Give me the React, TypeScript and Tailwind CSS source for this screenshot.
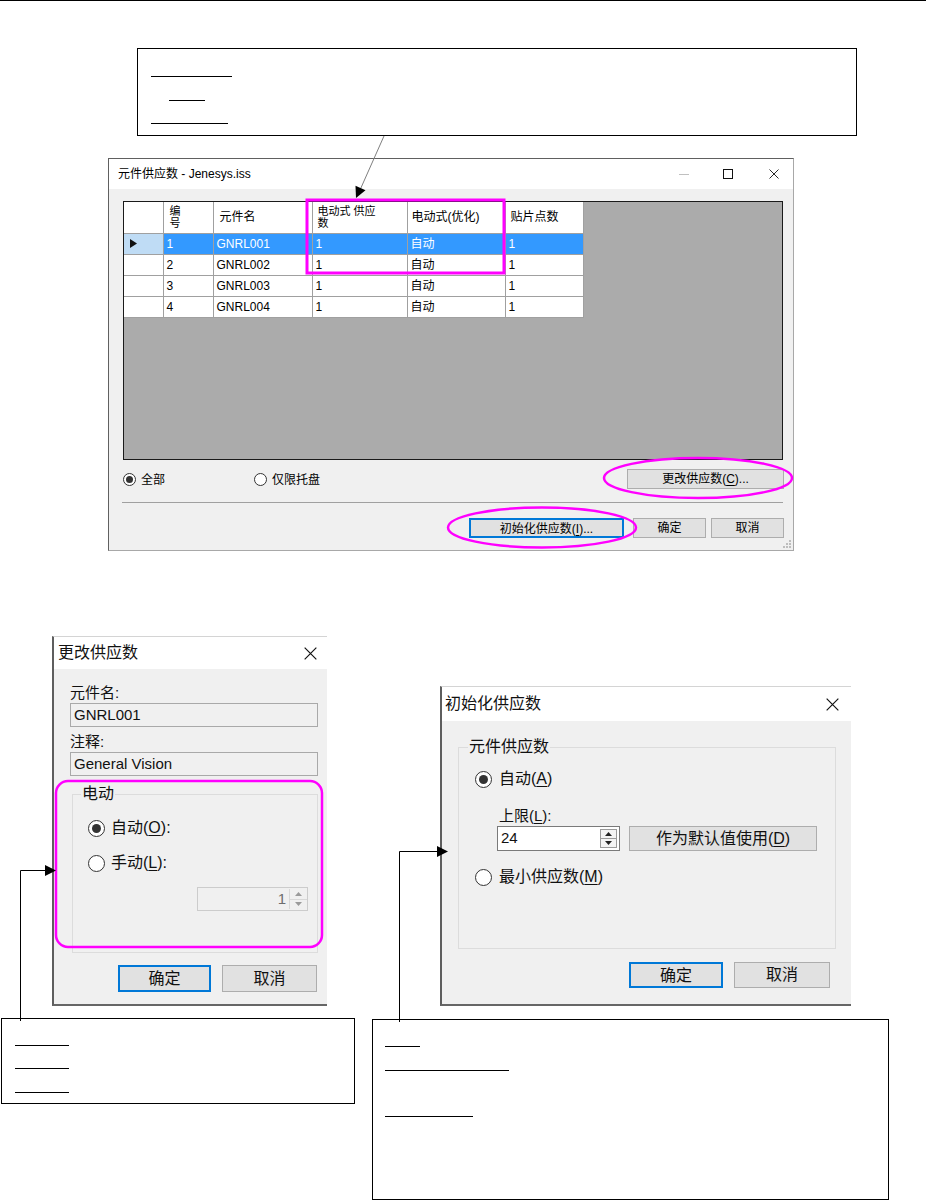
import React from "react";

const UI = "font-['Liberation_Sans','Noto_Sans_CJK_SC',sans-serif]";

function RadioSm({ checked }: { checked?: boolean }) {
  return (
    <span className="flex h-[13px] w-[13px] items-center justify-center rounded-full border border-[#333] bg-white">
      {checked && <span className="h-[7px] w-[7px] rounded-full bg-[#333]" />}
    </span>
  );
}

function RadioLg({ checked }: { checked?: boolean }) {
  return (
    <span className="flex h-[17px] w-[17px] shrink-0 items-center justify-center rounded-full border-[1.5px] border-[#333] bg-white">
      {checked && <span className="h-[9px] w-[9px] rounded-full bg-[#333]" />}
    </span>
  );
}

function CloseIcon({ s }: { s: number }) {
  return (
    <svg width={s} height={s} viewBox="0 0 10 10" className="block">
      <path d="M0.5 0.5 L9.5 9.5 M9.5 0.5 L0.5 9.5" stroke="#111" strokeWidth="0.9" fill="none" />
    </svg>
  );
}

function U({ children }: { children: React.ReactNode }) {
  return <span className="underline underline-offset-2">{children}</span>;
}

function MainDialog() {
  const head = "border-r border-b border-[#a0a0a0] bg-white text-left align-middle font-normal";
  const cell = "border-r border-b border-[#a0a0a0] pl-[3px] align-middle";
  const rows = ["GNRL001", "GNRL002", "GNRL003", "GNRL004"];
  return (
    <div className={`ml-[108px] mt-[22px] flex h-[393px] w-[686px] flex-col border-t border-l border-t-[#606060] border-l-[#606060] border-r border-b border-r-[#a8a8a8] border-b-[#a8a8a8] ${UI}`}>
      <div className="flex h-[30px] shrink-0 items-center bg-white pl-[9px] pr-[14px] text-[12px] text-black">
        <span>元件供应数 - Jenesys.iss</span>
        <span className="ml-auto h-px w-[10px] bg-[#c0c0c0]" />
        <span className="ml-[34px] h-[10px] w-[10px] border border-[#111]" />
        <span className="ml-[36px]">
          <CloseIcon s={10} />
        </span>
      </div>
      <div className="relative flex flex-1 flex-col bg-[#f0f0f0] pl-[14px] pr-[9px] pt-[12px] text-[12px] text-black">
        <div className="h-[259px] w-[660px] border border-[#1a1a1a] bg-[#ababab]">
          <table className="table-fixed border-collapse">
            <colgroup>
              <col className="w-[39px]" />
              <col className="w-[50px]" />
              <col className="w-[99px]" />
              <col className="w-[95px]" />
              <col className="w-[98px]" />
              <col className="w-[78px]" />
            </colgroup>
            <thead>
              <tr className="h-[31px]">
                <th className={head}></th>
                <th className={`${head} pl-[6px] text-[11px] leading-[12px]`}>
                  编<br />号
                </th>
                <th className={`${head} pl-[6px]`}>元件名</th>
                <th className={`${head} pl-[5px] text-[11px] leading-[12px]`}>
                  电动式 供应<br />数
                </th>
                <th className={`${head} pl-[4px]`}>电动式(优化)</th>
                <th className={`${head} pl-[5px]`}>贴片点数</th>
              </tr>
            </thead>
            <tbody>
              {rows.map((r, i) => {
                const sel = i === 0;
                const c = sel ? `${cell} bg-[#3399ff] text-white` : `${cell} bg-white`;
                return (
                  <tr key={r} className="h-[21px]">
                    <td className={`border-r border-b border-[#a0a0a0] ${sel ? "bg-[#bfdcf5]" : "bg-white"}`}>
                      {sel && (
                        <svg width="7" height="9" viewBox="0 0 7 9" className="ml-[6px] block">
                          <path d="M0 0 L7 4.5 L0 9 Z" fill="#111" />
                        </svg>
                      )}
                    </td>
                    <td className={c}>{i + 1}</td>
                    <td className={c}>{r}</td>
                    <td className={c}>1</td>
                    <td className={c}>自动</td>
                    <td className={c}>1</td>
                  </tr>
                );
              })}
            </tbody>
          </table>
        </div>
        <div className="mt-[9px] flex h-[20px] items-center">
          <RadioSm checked />
          <span className="ml-[5px] mt-[2px]">全部</span>
          <span className="ml-[89px] flex items-center">
            <RadioSm />
            <span className="ml-[5px] mt-[2px]">仅限托盘</span>
          </span>
          <button className="ml-auto h-[20px] w-[157px] border border-[#adadad] bg-[#e1e1e1] text-[12px]">
            更改供应数(<U>C</U>)...
          </button>
        </div>
        <div className="ml-[-1px] mt-[13px] h-px w-[661px] bg-[#a0a0a0]" />
        <div className="mt-[15px] flex h-[20px] justify-end">
          <button className="h-[20px] w-[155px] border-2 border-[#0078d7] bg-[#e1e1e1] text-[12px]">
            初始化供应数(<U>I</U>)...
          </button>
          <button className="ml-[9px] h-[20px] w-[73px] border border-[#adadad] bg-[#e1e1e1] text-[12px]">确定</button>
          <button className="ml-[5px] h-[20px] w-[73px] border border-[#adadad] bg-[#e1e1e1] text-[12px]">取消</button>
        </div>
        <svg width="8" height="8" viewBox="0 0 8 8" className="absolute bottom-[2px] right-[2px]">
          <rect x="6" y="0" width="2" height="2" fill="#bdbdbd" />
          <rect x="3" y="3" width="2" height="2" fill="#bdbdbd" />
          <rect x="6" y="3" width="2" height="2" fill="#bdbdbd" />
          <rect x="0" y="6" width="2" height="2" fill="#bdbdbd" />
          <rect x="3" y="6" width="2" height="2" fill="#bdbdbd" />
          <rect x="6" y="6" width="2" height="2" fill="#bdbdbd" />
        </svg>
      </div>
    </div>
  );
}

function ChangeDialog() {
  return (
    <div className={`ml-[52px] mt-[85px] flex h-[370px] w-[275px] flex-col border-t border-t-[#d4d4d4] border-l-2 border-l-[#5e5e5e] border-b-2 border-b-[#666] text-[#111] ${UI}`}>
      <div className="flex h-[32px] shrink-0 items-center bg-white pl-[4px] pr-[10px]">
        <span className="text-[16px]">更改供应数</span>
        <span className="ml-auto">
          <CloseIcon s={13} />
        </span>
      </div>
      <div className="flex flex-1 flex-col bg-[#f0f0f0] pl-[16px] pr-[9px] pt-[14px]">
        <div className="h-[20px] text-[15px] leading-[20px]">元件名:</div>
        <div className="flex h-[24px] items-center border border-[#a9a9a9] bg-[#f0f0f0] pl-[3px] text-[15px]">GNRL001</div>
        <div className="mt-[5px] h-[20px] text-[15px] leading-[20px]">注释:</div>
        <div className="flex h-[24px] items-center border border-[#a9a9a9] bg-[#f0f0f0] pl-[3px] text-[15px]">General Vision</div>
        <fieldset className="ml-[2px] mt-[8px] h-[169px] w-[246px] border border-[#dcdcdc]">
          <legend className="ml-[8px] px-[1px] text-[16px] leading-[20px]">电动</legend>
          <div className="flex flex-col pl-[15px] pr-[9px]">
            <div className="mt-[14px] flex h-[20px] items-center">
              <RadioLg checked />
              <span className="ml-[6px] text-[16px]">
                自动(<U>O</U>):
              </span>
            </div>
            <div className="mt-[15px] flex h-[20px] items-center">
              <RadioLg />
              <span className="ml-[6px] text-[16px]">
                手动(<U>L</U>):
              </span>
            </div>
            <div className="mt-[14px] flex h-[24px] w-[111px] items-center self-end border border-[#cccccc] bg-[#f0f0f0]">
              <span className="flex-1 pr-[3px] text-right text-[15px] text-[#6d6d6d]">1</span>
              <span className="flex h-[20px] w-[18px] flex-col border-l border-[#d8d8d8]">
                <span className="flex flex-1 items-center justify-center border-b border-[#d8d8d8]">
                  <svg width="7" height="4" viewBox="0 0 7 4"><path d="M0 4 L3.5 0 L7 4 Z" fill="#9a9a9a" /></svg>
                </span>
                <span className="flex flex-1 items-center justify-center">
                  <svg width="7" height="4" viewBox="0 0 7 4"><path d="M0 0 L3.5 4 L7 0 Z" fill="#9a9a9a" /></svg>
                </span>
              </span>
            </div>
          </div>
        </fieldset>
        <div className="mr-[1px] mt-[12px] flex justify-end">
          <button className="h-[27px] w-[93px] border-2 border-[#0078d7] bg-[#e1e1e1] text-[16px]">确定</button>
          <button className="ml-[11px] h-[27px] w-[95px] border border-[#adadad] bg-[#e1e1e1] text-[16px]">取消</button>
        </div>
      </div>
    </div>
  );
}

function InitDialog() {
  return (
    <div className={`ml-[113px] mt-[135px] flex h-[320px] w-[411px] flex-col border-t border-t-[#d4d4d4] border-l-2 border-l-[#5e5e5e] border-b-2 border-b-[#666] text-[#111] ${UI}`}>
      <div className="flex h-[34px] shrink-0 items-center bg-white pl-[3px] pr-[12px]">
        <span className="text-[16px]">初始化供应数</span>
        <span className="ml-auto">
          <CloseIcon s={13} />
        </span>
      </div>
      <div className="flex flex-1 flex-col bg-[#f0f0f0] pl-[16px] pr-[15px]">
        <fieldset className="mt-[16px] h-[212px] w-[378px] border border-[#dcdcdc]">
          <legend className="ml-[9px] px-[1px] text-[16px] leading-[20px]">元件供应数</legend>
          <div className="flex flex-col pl-[16px]">
            <div className="mt-[12px] flex h-[20px] items-center">
              <RadioLg checked />
              <span className="ml-[7px] text-[16px]">
                自动(<U>A</U>)
              </span>
            </div>
            <div className="ml-[24px] mt-[17px] h-[20px] text-[15px] leading-[20px]">
              上限(<U>L</U>):
            </div>
            <div className="ml-[22px] flex h-[25px]">
              <div className="flex h-[25px] w-[123px] items-center border border-[#7a7a7a] bg-white">
                <span className="flex-1 pl-[3px] text-[15px]">24</span>
                <span className="mr-[2px] flex h-[19px] w-[17px] flex-col border border-[#9a9a9a] bg-[#f4f4f4]">
                  <span className="flex flex-1 items-center justify-center border-b border-[#9a9a9a]">
                    <svg width="7" height="4" viewBox="0 0 7 4"><path d="M0 4 L3.5 0 L7 4 Z" fill="#222" /></svg>
                  </span>
                  <span className="flex flex-1 items-center justify-center">
                    <svg width="7" height="4" viewBox="0 0 7 4"><path d="M0 0 L3.5 4 L7 0 Z" fill="#222" /></svg>
                  </span>
                </span>
              </div>
              <button className="ml-[9px] h-[25px] w-[188px] border border-[#adadad] bg-[#e1e1e1] text-[16px]">
                作为默认值使用(<U>D</U>)
              </button>
            </div>
            <div className="mt-[16px] flex h-[20px] items-center">
              <RadioLg />
              <span className="ml-[7px] text-[16px]">
                最小供应数(<U>M</U>)
              </span>
            </div>
          </div>
        </fieldset>
        <div className="mr-[6px] mt-[13px] flex justify-end">
          <button className="h-[26px] w-[94px] border-2 border-[#0078d7] bg-[#e1e1e1] text-[16px]">确定</button>
          <button className="ml-[11px] h-[26px] w-[96px] border border-[#adadad] bg-[#e1e1e1] text-[16px]">取消</button>
        </div>
      </div>
    </div>
  );
}

export default function App() {
  return (
    <div className="relative h-[1204px] w-[926px] overflow-hidden bg-white">
      <div className="h-px w-full bg-black" />

      {/* top callout */}
      <div className="ml-[137px] mt-[47px] flex h-[88px] w-[720px] flex-col border border-black pl-[13px] pt-[27px]">
        <div className="h-px w-[81px] bg-black" />
        <div className="ml-[18px] mt-[23px] h-px w-[36px] bg-black" />
        <div className="mt-[22px] h-px w-[77px] bg-black" />
      </div>

      <MainDialog />

      <div className="flex items-start">
        <ChangeDialog />
        <InitDialog />
      </div>

      <div className="mt-[12px] flex items-start">
        <div className="ml-[1px] flex h-[86px] w-[354px] flex-col border border-black pl-[13px] pt-[26px]">
          <div className="h-px w-[54px] bg-black" />
          <div className="mt-[22px] h-px w-[54px] bg-black" />
          <div className="mt-[23px] h-px w-[54px] bg-black" />
        </div>
        <div className="ml-[17px] mt-[1px] flex h-[181px] w-[517px] flex-col border border-black pl-[12px] pt-[26px]">
          <div className="h-px w-[35px] bg-black" />
          <div className="mt-[23px] h-px w-[124px] bg-black" />
          <div className="mt-[45px] h-px w-[88px] bg-black" />
        </div>
      </div>

      {/* annotations overlay */}
      <svg className="pointer-events-none absolute left-0 top-0" width="926" height="1204" viewBox="0 0 926 1204">
        <line x1="384" y1="136" x2="360" y2="190" stroke="#7f7f7f" strokeWidth="1" />
        <polygon points="356,198 365.5,190.3 355.5,185.8" fill="#000" />
        <rect x="307" y="200" width="197" height="73" fill="none" stroke="#ff00ff" strokeWidth="3" />
        <ellipse cx="698" cy="478" rx="94" ry="20" fill="none" stroke="#ff00ff" strokeWidth="2.5" />
        <ellipse cx="542" cy="527.5" rx="94" ry="20" fill="none" stroke="#ff00ff" strokeWidth="2.5" />
        <rect x="56" y="781" width="266" height="166" rx="12" fill="none" stroke="#ff00ff" strokeWidth="2.5" />
        <polyline points="20.5,1021 20.5,870.5 46,870.5" fill="none" stroke="#000" strokeWidth="1" />
        <polygon points="56,870.5 45,865 45,876" fill="#000" />
        <polyline points="399.5,1022 399.5,851.5 438,851.5" fill="none" stroke="#000" strokeWidth="1" />
        <polygon points="448,851.5 437,846 437,857" fill="#000" />
      </svg>
    </div>
  );
}
